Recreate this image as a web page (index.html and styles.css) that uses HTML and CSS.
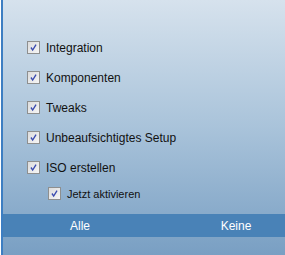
FILE: index.html
```html
<!DOCTYPE html>
<html lang="de">
<head>
    <meta charset="UTF-8">
    <title>Optionen</title>
    <link rel="stylesheet" href="styles.css">
</head>
<body>
    <div class="panel">
        <!-- Option list -->
        <div class="options">
            <label class="option"><span class="box"><svg viewBox="0 0 13 13"><path d="M3.5 6.5 L5.5 9.5 L9.5 3" /></svg></span>Integration</label>
            <label class="option"><span class="box"><svg viewBox="0 0 13 13"><path d="M3.5 6.5 L5.5 9.5 L9.5 3" /></svg></span>Komponenten</label>
            <label class="option"><span class="box"><svg viewBox="0 0 13 13"><path d="M3.5 6.5 L5.5 9.5 L9.5 3" /></svg></span>Tweaks</label>
            <label class="option"><span class="box"><svg viewBox="0 0 13 13"><path d="M3.5 6.5 L5.5 9.5 L9.5 3" /></svg></span>Unbeaufsichtigtes Setup</label>
            <label class="option"><span class="box"><svg viewBox="0 0 13 13"><path d="M3.5 6.5 L5.5 9.5 L9.5 3" /></svg></span>ISO erstellen</label>
            <label class="option sub"><span class="box"><svg viewBox="0 0 13 13"><path d="M3.5 6.5 L5.5 9.5 L9.5 3" /></svg></span>Jetzt aktivieren</label>
        </div>

        <!-- Select all / none -->
        <div class="actions">
            <button class="action all">Alle</button>
            <button class="action none">Keine</button>
        </div>
    </div>
</body>
</html>
```

FILE: styles.css
```css
body {
    margin: 0;
    font-family: "Liberation Sans", Arial, sans-serif;
    font-size: 12px;
    color: #000;
}

.panel {
    height: 255px;
    box-sizing: border-box;
    border-left: 2px solid #3d7ec2;
    margin-left: 1px;
    background: linear-gradient(to bottom, #d6e2ed 0%, #a9c3da 50%, #799fc3 100%);
    display: flex;
    flex-direction: column;
}

.options {
    padding: 41px 0 0 24px;
    display: flex;
    flex-direction: column;
    gap: 17px;
}

.option {
    display: flex;
    align-items: center;
    gap: 6px;
    height: 13px;
    color: #111;
}

.option.sub {
    margin-left: 21px;
    margin-top: -4px;
    font-size: 11px;
}

.box {
    width: 11px;
    height: 11px;
    border: 1px solid #8e8f8f;
    background: linear-gradient(to bottom right, #dcdcdc, #f6f6f6);
    display: flex;
}

.box svg {
    width: 11px;
    height: 11px;
    fill: none;
    stroke: #3a4bb0;
    stroke-width: 1.6;
}

.actions {
    margin-top: 14px;
    height: 23px;
    background-color: #4982b7;
    display: flex;
}

.action {
    border: none;
    background: transparent;
    color: #fff;
    font-family: inherit;
    font-size: 12px;
    padding: 0;
}

.action.all {
    width: 154px;
}

.action.none {
    flex: 1;
    padding-left: 30px;
}
```
